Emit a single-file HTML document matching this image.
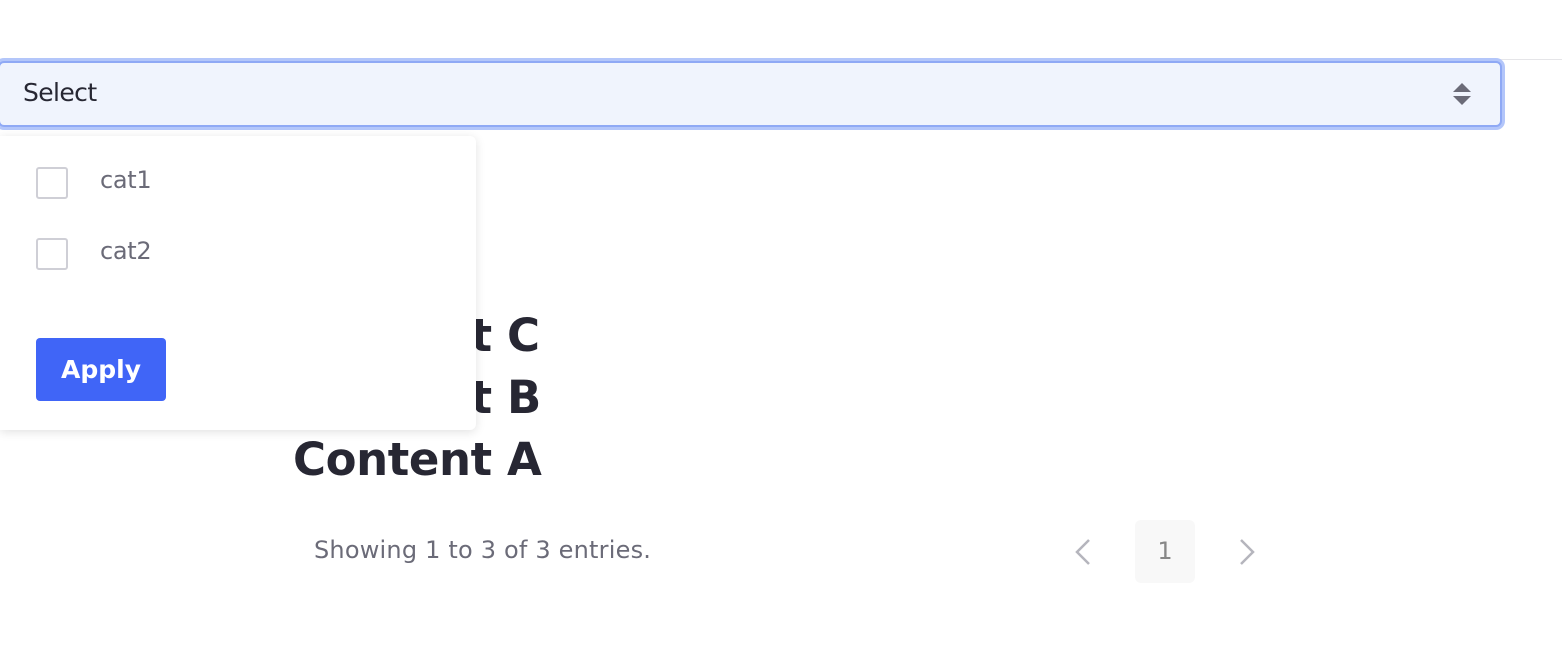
<!DOCTYPE html>
<html><head><style>
body{margin:0;width:1562px;height:658px;background:#fff;font-family:"DejaVu Sans","Liberation Sans",sans-serif;position:relative;overflow:hidden}
.line{position:absolute;left:0;top:59px;width:1562px;height:1px;background:#e5e5e8}
.sel{position:absolute;left:-2px;top:61px;width:1500px;height:62px;border:2px solid #8fa9f5;border-radius:6px;background:#f0f4fd;box-shadow:0 0 0 3px #b3c6fa;box-sizing:content-box}
.sel span{position:absolute;left:23px;top:15px;font-size:25px;color:#272733;letter-spacing:-0.6px}
.arr{position:absolute;left:1452px;top:81px}
.content{position:absolute;left:293px;top:305px;font-weight:bold;font-size:45px;line-height:62px;color:#272733;letter-spacing:-0.4px}
.dd{position:absolute;left:0;top:136px;width:476px;height:294px;background:#fff;border-radius:0 6px 6px 0;box-shadow:0 2px 10px rgba(0,0,0,.12)}
.cb{position:absolute;left:36px;width:28px;height:28px;border:2px solid #cfcfd6;border-radius:3px;background:#fff}
.lbl{position:absolute;left:100px;font-size:24px;color:#6b6b78;letter-spacing:-0.3px}
.btn{position:absolute;left:36px;top:202px;width:130px;height:63px;background:#4065f7;border-radius:4px;color:#fff;font-weight:bold;font-size:25px;text-align:center;line-height:63px}
.show{position:absolute;left:314px;top:536px;font-size:24px;color:#6b6b78;letter-spacing:0.2px}
.pg{position:absolute;left:1135px;top:520px;width:60px;height:63px;background:#f8f8f8;border-radius:6px;text-align:center;line-height:63px;font-size:24px;color:#888}
</style></head><body>
<div class="line"></div>
<div class="content">Content C<br>Content B<br>Content A</div>
<div class="sel"><span>Select</span></div>
<svg class="arr" width="20" height="26" viewBox="0 0 20 26"><path d="M1 11 L10 2 L19 11Z M1 15 L10 24 L19 15Z" fill="#6b6b78"/></svg>
<div class="dd">
<div class="cb" style="top:31px"></div><div class="lbl" style="top:30px">cat1</div>
<div class="cb" style="top:102px"></div><div class="lbl" style="top:101px">cat2</div>
<div class="btn">Apply</div>
</div>
<div class="show">Showing 1 to 3 of 3 entries.</div>
<svg style="position:absolute;left:1074px;top:538px" width="18" height="28"><path d="M15 2 L3 14 L15 26" stroke="#b5b5bd" stroke-width="2.5" fill="none"/></svg>
<div class="pg">1</div>
<svg style="position:absolute;left:1238px;top:538px" width="18" height="28"><path d="M3 2 L15 14 L3 26" stroke="#b5b5bd" stroke-width="2.5" fill="none"/></svg>
</body></html>
